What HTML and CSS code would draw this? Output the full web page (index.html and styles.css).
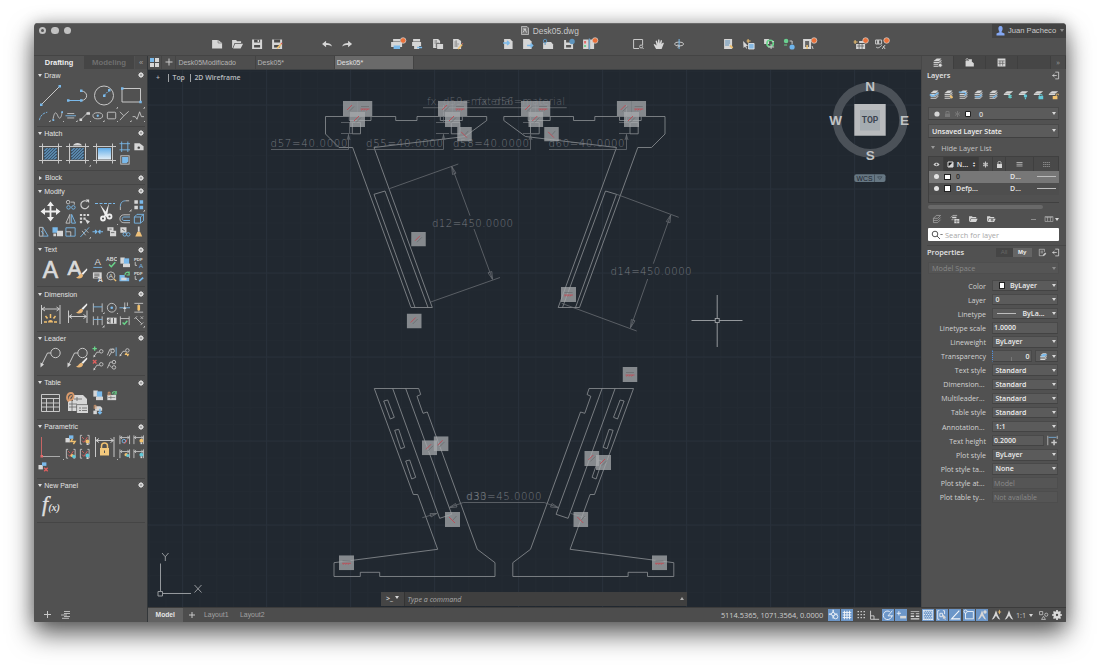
FILE: index.html
```html
<!DOCTYPE html>
<html lang="en">
<head>
<meta charset="utf-8">
<title>Desk05.dwg</title>
<link rel="stylesheet" href="styles.css">
</head>
<body>
<svg class="defs" width="0" height="0">
  <symbol id="gear" viewBox="0 0 12 12"><circle cx="6" cy="6" r="2.900" fill="none" stroke="#dcdcdc" stroke-width="3"/><path d="M6 0V12M0 6H12M1.8 1.8L10.2 10.2M10.2 1.8L1.8 10.2" stroke="#dcdcdc" stroke-width="2" stroke-dasharray="2.4 7.2 2.4"/></symbol>
  <symbol id="stack" viewBox="0 0 14 14"><path class="fw" d="M2 5L6 2h6L9 5zM2 6.2h7l3-2.6v1.4L9 7.6H2zM2 8.6h7l3-2.6v1.4L9 10H2zM2 11h7l3-2.6v1.2L9 12.4H2z"/></symbol>
  <symbol id="brush" viewBox="0 0 10 10"><path fill="#efefef" stroke="none" d="M9.600.3L5 4.600l1.200 1.200L10 1.400z"/><path fill="#e9b778" stroke="none" d="M5 4.800C2.600 5 3 7.600.3 8c2.500 1.600 5.700.600 6-2z"/></symbol>
  <symbol id="leader" viewBox="0 0 14 14"><path d="M2 11L5 6.500H8"/><circle cx="10" cy="5.500" r="2"/><path class="fw" d="M1 12.500l.5-3 2 1.600z"/></symbol>
  <symbol id="con" viewBox="0 0 14 14"><path d="M4 2H2V12H4M10 2H12V12H10"/><path class="r" d="M4 8L6 10L10 4M4 4l2 2"/></symbol>
  <symbol id="dimv" viewBox="0 0 14 14"><path d="M1.500 2V12M12.500 2V12M2 4.500H12M4 3L2 4.500L4 6M10 3L12 4.500L10 6"/></symbol>
  <symbol id="hash" viewBox="0 0 27 27"><path d="M5.500 3.500V23.500M21.500 3.500V23.500M2 6.500H25M2 20.500H25"/></symbol>
  <symbol id="lines" viewBox="0 0 27 27"><path fill="#39546b" stroke="none" d="M7 8h13v11.500H7z"/><path class="b" stroke-width="1" d="M7.500 11L10.500 8M7.500 14L13.500 8M7.500 17L16.500 8M8 19.500L19.500 8M11 19.500L19.500 11M14 19.500L19.500 14M17 19.500L19.500 17"/></symbol>
  <symbol id="person" viewBox="0 0 14 14"><path class="fw" d="M7 1.500L9 7L12 12.500L9.500 11.500L7 8L4.500 11.500L2 12.500L5 7z"/></symbol>
  <symbol id="folder" viewBox="0 0 14 14"><path class="fw" d="M1.500 3h4l1 1.300h5V6H4L2 10.800h-.5z"/><path class="fw" d="M4.500 6.700h9L11.300 11.300H2.500z"/></symbol>
  <symbol id="import" viewBox="0 0 10 12"><path d="M4 1.500H8.500V10.500H4" fill="none" stroke="#ddd"/><path d="M0 6H6M3 4L.8 6L3 8" fill="none" stroke="#ddd"/></symbol>
  <symbol id="b1" viewBox="0 0 15 15"><path fill="#a5a8ab" fill-opacity=".76" d="M0 0H15V15H0z"/><path stroke="#c04a54" stroke-width=".9" d="M4 9L9 4"/><path stroke="#686c6f" stroke-width=".8" d="M6 10.500L11 5.500"/></symbol>
  <symbol id="b2" viewBox="0 0 15 15"><path fill="#a5a8ab" fill-opacity=".76" d="M0 0H15V15H0z"/><path stroke="#686c6f" stroke-width=".7" d="M3.500 5.500H11.500"/><path stroke="#c04a54" stroke-width=".8" d="M3 8H12M4 9.500L5.200 8M6.500 9.500L7.700 8M9 9.500L10.200 8"/></symbol>
  <symbol id="b3" viewBox="0 0 15 15"><path fill="#a5a8ab" fill-opacity=".76" d="M0 0H15V15H0z"/><path stroke="#c04a54" stroke-width=".9" d="M4 5L10 11"/><path stroke="#686c6f" stroke-width=".8" d="M8 8L11.500 4"/></symbol>
</svg>

<div class="window">
  <header class="titlebar">
    <div class="title-row">
      <div class="lights"><i class="dot edited"></i><i class="dot"></i><i class="dot"></i></div>
      <div class="title"><svg width="8" height="9" viewBox="0 0 8 9"><path fill="#777" stroke="#c4c4c4" stroke-width=".8" d="M.5.500H6L7.500 2V8.500H.5z"/><path stroke="#ddd" stroke-width=".8" fill="none" d="M2 6.500L4 3l1.500 3.500M2 3h3"/></svg>Desk05.dwg</div>
      <div class="user"><svg width="9" height="10" viewBox="0 0 9 10"><path fill="#84a8f4" stroke="none" d="M4.500 0C6.600 0 6.800 2 6.500 3.500C6.200 5 5.500 5.500 5.500 6.300L8.500 7.500V9.500H.5V7.500L3.500 6.300C3.500 5.500 2.800 5 2.500 3.500C2.200 2 2.400 0 4.500 0z"/></svg><span>Juan Pacheco</span><b class="caret dim"></b></div>
    </div>
    <nav class="toolbar">
      <div class="group g1">
        <svg viewBox="0 0 20 14"><path class="fw" d="M5 3h6l4 3v5.500H5z"/><path stroke="#777" stroke-width=".7" d="M11 3v3h4"/></svg>
        <svg viewBox="0 0 20 14"><path class="fw" d="M5 3h4l1 1.300h4V6H7.500L5.500 11H5z"/><path class="fw" d="M8 6.800h8L13.500 11.500H6z"/></svg>
        <svg viewBox="0 0 20 14"><path class="fw" d="M5 2.500H15V12H5z"/><path fill="#4a4a4a" stroke="none" d="M7 2.500h6v3H7zM7 8h6v2.500H7z"/><path class="fw" d="M10.500 3h1.500v2h-1.500z"/></svg>
        <svg viewBox="0 0 20 14"><path class="fw" d="M5 2.500H15V12H5z"/><path fill="#4a4a4a" stroke="none" d="M7 2.500h6v3H7zM7 8h6v2.500H7z"/><path class="y" stroke-width="1.800" d="M10 11.500L14 7"/><path class="r" stroke-width="1.500" d="M14 7l1-1"/></svg>
      </div>
      <div class="group g2">
        <svg viewBox="0 0 20 14"><path class="fw" d="M5 7L9 3.700V6C12 6 14 6.500 15 9.500C13 8 11.500 8 9 8V10.300z"/></svg>
        <svg viewBox="0 0 20 14"><path class="fw" d="M15 7L11 3.700V6C8 6 6 6.500 5 9.500C7 8 8.500 8 11 8V10.300z"/></svg>
      </div>
      <div class="group g3">
        <svg viewBox="0 0 20 14"><path class="fw" d="M6 2h7v2.500H6zM4 5h11v5H4z"/><path class="fb" d="M6.500 8.500h6.500V12H6.500z"/><circle class="fo" cx="16" cy="3.500" r="2.800"/></svg>
        <svg viewBox="0 0 20 14"><path class="fw" d="M6 2h7v2.500H6zM5 5h9v4H5zM7 9h5v3H7z"/><path class="b" stroke-width="1.500" d="M10 10.500h5"/></svg>
        <svg viewBox="0 0 20 14"><path class="fw" d="M5 2h5l2 2v7H5z"/><path stroke="#777" stroke-width=".6" d="M6 4h3M6 6h5M8 3v7"/><path class="fw" d="M9 7h6v5H9z"/><path stroke="#555" stroke-width=".7" d="M8.500 12V6.500H15"/></svg>
        <svg viewBox="0 0 20 14"><path class="fw" d="M5 2h5l3 2v8H5z"/><path stroke="#777" stroke-width=".6" d="M6 5h3M6 7h5M6 9h4M8 3v7"/><path class="y" stroke-width="1.700" d="M10 12L14 7.500"/><path class="r" d="M14 7l.8-.8"/></svg>
      </div>
      <div class="group g4">
        <svg viewBox="0 0 20 14"><path class="fw" d="M6 2h6l2.500 2.500V12H6z"/><path class="b" stroke-width="1.500" d="M5 6h6M9 4l2 2-2 2"/></svg>
        <svg viewBox="0 0 20 14"><path class="fw" d="M5 2h6l2.500 2.500V12H5z"/><path class="b" stroke-width="1.500" d="M9 8.500h6M12.500 6.500l2 2-2 2"/></svg>
        <svg viewBox="0 0 20 14"><path class="fw" d="M6 5h7l2 2.500V12H5V6z"/><circle class="b2" cx="7" cy="4" r="1.700" fill="none"/><path class="b2" d="M7 5v3"/></svg>
        <svg viewBox="0 0 20 14"><path class="fw" d="M5 3H14V12H5z"/><path fill="#555" stroke="none" d="M7 3h4v2.500H7zM7 8h5v2.500H7z"/><circle fill="#5e94bd" stroke="none" cx="13" cy="4.500" r="2.700"/></svg>
        <svg viewBox="0 0 20 14"><path class="fw" d="M4 2.500h5.500V12H4zM11 2.500h4V12h-4z"/><path class="b" d="M10.200 1.500v11"/><path class="fr" d="M5 4h2v2.500H5z"/><path class="fg" d="M5 8h2v2H5z"/><circle class="fo" cx="16" cy="3.500" r="2.800"/></svg>
      </div>
      <div class="group g5">
        <svg viewBox="0 0 20 14"><path d="M14.500 8V2.500H5.500V11.500H11"/><circle cx="13" cy="9.500" r="1.500"/><path d="M14 10.500l1.500 1.500"/></svg>
        <svg viewBox="0 0 20 14"><path class="fw" d="M7 12L4.500 7.500L5.500 7L7.500 8.500L6.500 4L7.700 3.600L8.800 6.500L9 2.500H10.300L10.600 6.500L11.800 3L13 3.500L12.300 7L14 5.500L14.800 6.200L12.500 12z"/></svg>
        <svg viewBox="0 0 20 14"><ellipse cx="10" cy="7" rx="4.500" ry="2"/><path class="b" d="M10 2v10"/><path d="M8.500 7.500L10.500 9L8.500 10.500"/></svg>
      </div>
      <div class="group g6">
        <svg viewBox="0 0 20 14"><path class="fw" d="M6 2h8v10H6z"/><path stroke="#5d8fb8" d="M7 4h5M7 6h5M7 8h4"/><path class="y" stroke-width="1.800" d="M12 8.500l2.500 2.500"/></svg>
        <svg viewBox="0 0 20 14"><path class="fw" d="M4 4l5 5H7l1 2.500H7L6 9.500L4.500 11z"/><path class="y" d="M9 2v4M7.500 4h4"/><path fill="#86b9e2" stroke="#eee" stroke-width=".8" d="M9.500 6.500h5.500V12H9.500z"/></svg>
        <svg viewBox="0 0 20 14"><path class="fw" d="M5 2h5v5H5z"/><circle class="g" cx="11" cy="6.500" r="3.200" stroke-width="1.600"/><path d="M9 10h6M12 7v5M13 4.500h2"/></svg>
        <svg viewBox="0 0 20 14"><circle class="fg" cx="7" cy="4" r="2.300"/><path d="M10.500 4H13V7"/><circle fill="#6fb5ec" stroke="none" cx="13" cy="10" r="2.600"/><path class="g" d="M5 8h3"/></svg>
        <svg viewBox="0 0 20 14"><path class="fw" d="M4 2h8v10H4z"/><path fill="#666" stroke="none" d="M6 4h4v6H6z"/><path class="y" stroke-width="1.500" d="M8 8v4"/><path d="M13 9l1 3"/><circle class="fo" cx="15" cy="3.500" r="2.800"/></svg>
      </div>
      <div class="group g7">
        <svg viewBox="0 0 20 14"><path class="fw" d="M6 7h9v5H6zM9 4h5v2H9z"/><path stroke="#555" stroke-width=".7" d="M7 9h7M9 7v5M12 7v5"/><path class="y" d="M5 3v4M3.500 5h4"/><circle class="fo" cx="15.500" cy="3.500" r="2.800"/></svg>
        <svg viewBox="0 0 20 14"><path d="M4.500 3h6v4h-6zM5 10c2 2 4 0 6-2M12 9l2 3M14 8l-3 4"/><path stroke-width="2" d="M7 3v4"/><circle class="fo" cx="15.500" cy="3.500" r="2.800"/></svg>
      </div>
    </nav>
  </header>

  <div class="body">
    <aside class="left">
      <div class="modes"><b class="on">Drafting</b><b>Modeling</b><span>«</span></div>

      <section class="panel tall first">
        <h3><i class="tri"></i>Draw<svg class="gear"><use href="#gear"/></svg></h3>
        <div class="tools">
          <svg class="big" viewBox="0 0 27 27"><path d="M4.500 22.500L22.500 4.500"/><path class="fb" d="M3 21.500h2.500V24H3zM21.500 3H24v2.500h-2.500z"/></svg>
          <svg class="big" viewBox="0 0 27 27"><path d="M4 18.500H17C24.500 18.500 24.500 9 17 9"/><path class="b" d="M4 18.500H16"/><path class="fb" d="M3 17.300h2.500v2.500H3zM16 17.300h2.500v2.500H16zM16 7.500h2.500V10H16z"/></svg>
          <svg class="big flag" viewBox="0 0 27 27"><circle cx="13" cy="13.500" r="9.500"/><path class="b" stroke-dasharray="2 1" d="M13 13.500L18.500 8"/><path class="fb" d="M12 12.500h2.500V15H12zM17 7h2.500v2.500H17z"/></svg>
          <svg class="big flag" viewBox="0 0 27 27"><path d="M4 6.500H22.500V20H4z"/><path class="fb" d="M3 5.300h2.500v2.500H3zM21.300 18.800h2.500v2.500h-2.500z"/></svg>
          <svg class="flag" viewBox="0 0 14 14"><path class="b" stroke-dasharray="3 1" d="M2 12C3 7 6 4 11 3"/></svg>
          <svg class="flag" viewBox="0 0 14 14"><path d="M1.500 12C3 2 5 2 7 7S11 10 12 2.500"/><path class="fb" d="M1 11h2v2H1zM11 2h2v2h-2z"/></svg>
          <svg class="flag" viewBox="0 0 14 14"><path class="b" d="M1 7H13"/><path d="M3 4.500h8M3 9.500h8"/></svg>
          <svg class="flag" viewBox="0 0 14 14"><path d="M2.500 11.500L11.500 2.500"/><path class="fw" d="M1 10h3v3H1zM9 3h4v3H9z"/></svg>
          <svg class="flag" viewBox="0 0 14 14"><ellipse cx="7" cy="7" rx="5.500" ry="3.500"/><circle class="fb" cx="7" cy="7" r="1.300"/></svg>
          <svg class="flag" viewBox="0 0 14 14"><rect x="2" y="3" width="9.500" height="7.500" rx="1"/></svg>
          <svg class="flag" viewBox="0 0 14 14"><path d="M1.500 2.500L6 7L11.500 2M6 7L1.500 12"/></svg>
          <svg class="flag" viewBox="0 0 14 14"><path d="M0 8H3L5 11L8 2.500L10 8H13"/></svg>
        </div>
      </section>

      <section class="panel">
        <h3><i class="tri"></i>Hatch<svg class="gear"><use href="#gear"/></svg></h3>
        <div class="tools">
          <svg class="big" viewBox="0 0 27 27"><use href="#lines"/><use href="#hash"/></svg>
          <svg class="big flag" viewBox="0 0 27 27"><use href="#lines"/><use href="#hash"/><path class="fw" d="M9 5.500c1-3.500 8-3.500 9 0z"/></svg>
          <svg class="big" viewBox="0 0 27 27"><defs><linearGradient id="fade" x2="0" y2="1"><stop stop-color="#62aeea"/><stop offset="1" stop-color="#e4eef6"/></linearGradient></defs><path fill="url(#fade)" stroke="none" d="M7 8h13v11.500H7z"/><use href="#hash"/></svg>
          <svg viewBox="0 0 14 14"><path class="b" d="M3.500 1V13M10.500 1V13M1 3.500H13M1 10.500H13"/></svg>
          <svg viewBox="0 0 14 14"><path class="fw" d="M2 3h6l4.500 3.500V11H2z"/><circle cx="7" cy="8" r="1.400" fill="#444" stroke="none"/></svg>
          <svg viewBox="0 0 14 14"><path class="fb" d="M4 4h7v5l-2 2H4z"/><rect x="2.500" y="2.500" width="9.500" height="9.500"/></svg>
        </div>
      </section>

      <section class="panel closed">
        <h3><i class="tri folded"></i>Block<svg class="gear"><use href="#gear"/></svg></h3>
      </section>

      <section class="panel tall">
        <h3><i class="tri"></i>Modify<svg class="gear"><use href="#gear"/></svg></h3>
        <div class="tools">
          <svg class="big" viewBox="0 0 27 27"><path stroke="#eee" stroke-width="1.800" d="M13.500 6V21M6 13.500H21"/><path fill="#eee" stroke="none" d="M13.500 3.500L17 8h-7zM13.500 23.500L17 19h-7zM3.500 13.500L8 10v7zM23.500 13.500L19 10v7z"/></svg>
          <svg viewBox="0 0 14 14"><circle cx="4" cy="4" r="2"/><path d="M7 4h4v3"/><g class="b"><circle cx="4.500" cy="10" r="2"/><circle cx="10" cy="10" r="2"/></g></svg>
          <svg viewBox="0 0 14 14"><path stroke-width="1.400" d="M10 3.500A4.500 4.500 0 1 0 11.500 8"/><path class="fw" d="M8 1h4v4z"/></svg>
          <svg class="big flag" viewBox="0 0 27 27"><path class="b" stroke-dasharray="3 1.500" d="M4 5.500H24"/><path fill="#eee" stroke="none" d="M9 6.500l8 10-2.500 2zM18 5l-2 14-3-1z"/><g stroke="#eee" stroke-width="1.800"><circle cx="12" cy="20.500" r="2"/><circle cx="18.500" cy="18.500" r="2"/></g></svg>
          <svg class="flag" viewBox="0 0 14 14"><path d="M2 13V9M8 2.500H12"/><path class="b" d="M2 9C2 4 5 2.500 8 2.500"/></svg>
          <svg class="flag" viewBox="0 0 14 14"><path class="fw" d="M2 2h4v4H2zM2 8h4v4H2z"/><path class="fb" d="M8 2h4v4H8zM8 8h4v4H8z"/></svg>
          <svg viewBox="0 0 14 14"><path d="M6 2V12H1.500z"/><path class="b" d="M8 2V12H12.500z"/></svg>
          <svg viewBox="0 0 14 14"><path class="fw" d="M1.500 1.500h2.500v2.500h-2.500zM5.500 1.500H8V4H5.500zM9.500 1.500H12V4H9.500zM1.500 5.500h2.500V8h-2.500zM5.500 5.500H8V8H5.500zM1.500 9.500h2.500V12h-2.500zM7 7l6 3-3 3z"/></svg>
          <svg viewBox="0 0 14 14"><path d="M13 2.500H6C0 2.500 0 11.500 6 11.500H13"/><path class="b" d="M13 5H6C3.500 5 3.500 9 6 9H13"/></svg>
          <svg viewBox="0 0 14 14"><path class="b" d="M2 5h7v7H2zM2 5l3-3h7.500v7L9 12M9 5l3.500-3"/></svg>
          <svg viewBox="0 0 14 14"><path d="M2 2h4v10H2z"/><path class="b" d="M6 2l6 10H6M4 6l3 4"/></svg>
          <svg viewBox="0 0 14 14"><path class="fb" d="M1 2h6v6H1z"/><path class="fw" d="M6 6h7v6H6zM2 9h3v3H2z"/></svg>
          <svg viewBox="0 0 14 14"><path class="b" d="M1.500 2.500H12V12H1.500z"/><path d="M1.500 7H7v5"/></svg>
          <svg class="flag" viewBox="0 0 14 14"><path class="b" d="M2 13L12 2"/><path d="M4 6l4 5M7 4l4 4"/></svg>
          <svg viewBox="0 0 14 14"><path class="b" stroke-width="1.400" d="M1 7H6M8 7H13M4 5l2 2-2 2M10 5L8 7l2 2"/></svg>
          <svg viewBox="0 0 14 14"><path class="fw" d="M2 2h7v4H2zM5 6h7v6H5z"/><path stroke="#666" d="M6 8h4M4 4h3"/></svg>
          <svg viewBox="0 0 14 14"><path class="fw" d="M2 2h7v6H2z"/><path stroke="#555" d="M4 4l3 2"/><g class="b"><circle cx="7" cy="10" r="2"/><circle cx="11" cy="10" r="2"/></g></svg>
          <svg viewBox="0 0 14 14"><path class="fw" d="M6 1h2v6H6z"/><path fill="#eec078" stroke="none" d="M5.500 7h3L11 12.500H3z"/></svg>
        </div>
      </section>

      <section class="panel">
        <h3><i class="tri"></i>Text<svg class="gear"><use href="#gear"/></svg></h3>
        <div class="tools">
          <svg class="big" viewBox="0 0 27 27"><text class="gl heavy" x="13.500" y="22" font-size="23" text-anchor="middle">A</text></svg>
          <svg class="big" viewBox="0 0 27 27"><text class="gl heavy" x="10.500" y="19" font-size="21" text-anchor="middle">A</text><use href="#brush" x="11.500" y="12" width="12" height="12"/></svg>
          <svg viewBox="0 0 14 14"><text class="gl" x="7" y="10" font-size="11" text-anchor="middle">A</text><path class="b" d="M2 12.300H12"/></svg>
          <svg viewBox="0 0 14 14"><text class="gl bold" x="7" y="5" font-size="6" text-anchor="middle">ABC</text><path class="g" stroke-width="1.700" d="M4 9L6.500 11.500L11 6.500"/></svg>
          <svg viewBox="0 0 14 14"><path class="fw" d="M2 1h5v7H2z"/><path class="fb" d="M6 2h6v8H6z"/><path class="fw" d="M5 8h8v4H5z"/></svg>
          <svg viewBox="0 0 14 14"><text class="gl bold" x="6.500" y="5" font-size="5" text-anchor="middle">PDF</text><path d="M3 6v4h2"/><text x="9.500" y="13" font-size="7" class="bl" text-anchor="middle">A</text></svg>
          <svg viewBox="0 0 14 14"><path class="fw" d="M1.500 2h10v7h-10z"/><path stroke="#555" d="M3 4h6M3 6h6M3 8h4"/><text class="gl bold" x="10" y="12.500" font-size="8" text-anchor="middle">A</text></svg>
          <svg viewBox="0 0 14 14"><circle cx="6" cy="6" r="4.500"/><text class="gl" x="6" y="8.500" font-size="7" text-anchor="middle">A</text><path class="y" stroke-width="1.500" d="M9.500 9.500L12 12"/></svg>
          <svg viewBox="0 0 14 14"><path class="fb" d="M1 5h6v7H1zM6 8h6v4H6z"/><path class="fw" d="M3 8h6v3H3z"/><path class="g" stroke-width="1.300" d="M7.500 5A2.500 2.500 0 0 1 12 3M12 1V5H9"/></svg>
          <svg viewBox="0 0 14 14"><text class="gl bold" x="6.500" y="5" font-size="5" text-anchor="middle">PDF</text><path d="M3 6v4h2"/><path class="b" stroke-width="2" d="M7.500 12L12 8"/></svg>
        </div>
      </section>

      <section class="panel">
        <h3><i class="tri"></i>Dimension<svg class="gear"><use href="#gear"/></svg></h3>
        <div class="tools">
          <svg class="big" viewBox="0 0 27 27"><path d="M4.500 4V23M23 4V23M5 8H22M8 6L5 8l3 2M19.500 6l3 2-3 2"/><path class="y" stroke-width="1.500" d="M7 21H10M17 21h3M13.500 13v4M8.500 15l2 2.500M18.500 15l-2 2.500"/><path fill="#f0bd6e" stroke="none" d="M11 21.500a2.500 2.500 0 0 1 5 0z"/></svg>
          <svg class="big" viewBox="0 0 27 27"><path d="M4.500 9.500V22M23 9.500V22M5 15.500H22M8 13.500L5 15.500l3 2M19.500 13.500l3 2-3 2"/><use href="#brush" x="11.500" y="2" width="12" height="12"/></svg>
          <svg class="flag" viewBox="0 0 14 14"><path d="M2 2V12M12 2V12"/><path class="b" d="M2 6H12"/></svg>
          <svg class="flag" viewBox="0 0 14 14"><circle cx="7" cy="7" r="5"/><circle class="fb" cx="7" cy="7" r="1.500"/></svg>
          <svg viewBox="0 0 14 14"><path d="M7 1V12M10 1V5"/><path class="b" d="M1 7H13"/><path class="fw" d="M7 5.500L9 8.500H5z"/></svg>
          <svg viewBox="0 0 14 14"><path d="M2 2H12M2 12H12M7 3V11"/><path class="fy" d="M5.500 4h3v6h-3z"/></svg>
          <svg class="flag" viewBox="0 0 14 14"><path d="M2 2V12M7 2V12M12 2V12"/><path class="b" d="M2 5.500H12"/></svg>
          <svg viewBox="0 0 14 14"><path class="fw" d="M1.500 3.500h11v7h-11z"/><path stroke="#444" d="M5 4v6M9 4v6"/><circle cx="3.500" cy="7" r="1" stroke="#444"/></svg>
          <svg viewBox="0 0 14 14"><path d="M2 2V12M12 2V12M2 4.500H12"/><path class="g" stroke-width="1.600" d="M4.500 9L6.500 11L10 7"/></svg>
          <svg class="flag" viewBox="0 0 14 14"><path d="M2 5L5 2M9 12L12 9M3.500 3.500L10.500 10.500"/><path stroke-width=".8" d="M9 2l3 3M12 2L9 5"/></svg>
        </div>
      </section>

      <section class="panel">
        <h3><i class="tri"></i>Leader<svg class="gear"><use href="#gear"/></svg></h3>
        <div class="tools">
          <svg class="big" viewBox="0 0 27 27"><circle cx="18.500" cy="8" r="4.700"/><path d="M13.800 8H10.500L4.500 20"/><path class="fw" d="M3.500 22.500L3.500 17.500L7 19.500z"/></svg>
          <svg class="big" viewBox="0 0 27 27"><circle cx="18.500" cy="8" r="4.700"/><path d="M13.800 8H10.500L4.500 20"/><path class="fw" d="M3.500 22.500L3.500 17.500L7 19.500z"/><use href="#brush" x="11.500" y="12" width="12" height="12"/></svg>
          <svg viewBox="0 0 14 14"><use href="#leader" x="1" y="1"/><path class="g" stroke-width="1.500" d="M1 3.500h5M3.500 1v5"/></svg>
          <svg viewBox="0 0 14 14"><path d="M2 11L5 4H10M4 12L7 7"/><circle cx="8" cy="6" r="2"/><path class="b" d="M12 2V12"/></svg>
          <svg viewBox="0 0 14 14"><use href="#leader"/><path class="y" stroke-width="1.500" d="M9 8l-1 2h3l-1 2"/></svg>
          <svg></svg>
          <svg viewBox="0 0 14 14"><use href="#leader" x="1" y="1"/><path class="r" stroke-width="1.500" d="M1.500 1.500l4 4M5.500 1.500l-4 4"/></svg>
          <svg viewBox="0 0 14 14"><path d="M2 11L5 4H8"/><circle cx="9.500" cy="4" r="2"/><circle cx="9.500" cy="10" r="2"/><path d="M4 7l3 3"/></svg>
        </div>
      </section>

      <section class="panel">
        <h3><i class="tri"></i>Table<svg class="gear"><use href="#gear"/></svg></h3>
        <div class="tools">
          <svg class="big" viewBox="0 0 27 27"><path d="M4.500 5.500H22.500V22.500H4.500zM4.500 9.500H22.500M4.500 14H22.500M4.500 18H22.500M9.500 9.500V22M16.500 9.500V22"/></svg>
          <svg class="big" viewBox="0 0 27 27"><path class="fw" d="M9 6h10l4 4v7H9zM4 12h16v10H4zM13 16h11v8H13z"/><path stroke="#666" stroke-width=".8" d="M5 15h8M5 18h8M8 12v10M15 19h2M18 19h5M15 21.500h2M18 21.500h5M13 8v4M10 10h8M12.600 24v-8.400H24"/><path stroke="#d7996b" stroke-width="1.800" d="M5 12.500C1.500 10 3 4 7 4S10 10 7 11S6 6 8 7"/></svg>
          <svg viewBox="0 0 14 14"><path class="fw" d="M2 1h5v7H2z"/><path class="fb" d="M6 2h6v8H6z"/><path class="fw" d="M5 8h8v4H5z"/></svg>
          <svg viewBox="0 0 14 14"><path class="fw" d="M2 6h10v6H2z"/><path stroke="#666" stroke-width=".7" d="M3 9h8M6 7v4"/><path stroke="#d7996b" d="M3 7V3h2v4"/><path class="g" stroke-width="1.200" d="M7.500 4.500A2.500 2.500 0 0 1 12 3.500M12 1.500V5H9"/></svg>
          <svg></svg><svg></svg>
          <svg viewBox="0 0 14 14"><path class="fw" d="M4 3h6l2 2v3H4z"/><path stroke="#d7996b" d="M3 6V2h2v4"/><path class="b" stroke-width="1.800" d="M9.500 6v5M7.500 9.500l2 2 2-2"/><path class="fw" d="M2 8h4v4H2z"/></svg>
        </div>
      </section>

      <section class="panel tall">
        <h3><i class="tri"></i>Parametric<svg class="gear"><use href="#gear"/></svg></h3>
        <div class="tools">
          <svg class="big flag" viewBox="0 0 27 27"><path d="M5 23.500H23" stroke="#aaa"/><path stroke="#c76564" d="M4.500 4V23"/><path class="fr" d="M3.500 22h2.500v2.500H3.500z"/></svg>
          <svg viewBox="0 0 14 14"><path class="fw" d="M1 5h5v5H1z"/><path class="fb" d="M5 2h5v4H5z"/><path class="y" stroke-width="1.600" d="M9 6l-2 3h5l-2 3"/></svg>
          <svg viewBox="0 0 14 14"><use href="#con"/><circle class="fy" cx="10" cy="9" r="2.200"/><path class="fw" d="M9 11h2v2H9z"/></svg>
          <svg class="big flag" viewBox="0 0 27 27"><path d="M4.500 4V24M23 4V24M5 7.500H22M8 5.500L5 7.500l3 2M19.500 5.500l3 2-3 2"/><path class="y" stroke-width="1.500" d="M10.500 15v-2a3 3 0 0 1 6 0v2"/><path fill="#f3c97d" stroke="none" d="M9 15h9v7.500H9z"/><path stroke="#555" d="M13.500 17.500v2.500"/></svg>
          <svg viewBox="0 0 14 14"><use href="#dimv"/><circle class="b" cx="6" cy="8.500" r="2"/><path class="r" d="M6 11A3 3 0 0 0 9 7"/></svg>
          <svg viewBox="0 0 14 14"><use href="#dimv"/><circle class="fy" cx="10" cy="8" r="2.200"/><path class="fw" d="M9 10h2v2H9z"/></svg>
          <svg viewBox="0 0 14 14"><use href="#con"/><circle class="fy" cx="8.500" cy="9" r="1.800"/><circle class="fc" cx="10.500" cy="10" r="2"/></svg>
          <svg viewBox="0 0 14 14"><use href="#con"/><circle class="fc" cx="10" cy="9" r="2.200"/><path class="fw" d="M9 11h2v2H9z"/></svg>
          <svg viewBox="0 0 14 14"><use href="#dimv"/><circle class="fy" cx="8.500" cy="8" r="1.800"/><circle class="fc" cx="10.500" cy="9" r="1.800"/></svg>
          <svg viewBox="0 0 14 14"><use href="#dimv"/><circle class="fc" cx="10" cy="8" r="2.200"/><path class="fw" d="M9 10h2v2H9z"/></svg>
          <svg viewBox="0 0 14 14"><path class="fw" d="M1 5h5v5H1z"/><path class="fb" d="M5 2h5v4H5z"/><path class="r" stroke-width="1.600" d="M7.500 8l4 4M11.500 8l-4 4"/></svg>
        </div>
      </section>

      <section class="panel last">
        <h3><i class="tri"></i>New Panel<svg class="gear"><use href="#gear"/></svg></h3>
        <div class="fx"><span>f</span>(x)</div>
      </section>

      <footer class="left-foot">
        <svg width="9" height="9" viewBox="0 0 9 9"><path d="M4.500 1V8M1 4.500H8"/></svg>
        <svg width="10" height="9" viewBox="0 0 10 9"><path d="M3 1.500h6M3 3.500h6M0 5h6M3 6.500h6M1 8.300h7" stroke-width=".9"/></svg>
      </footer>
    </aside>

    <div class="rest">
      <div class="mid">
        <main class="center">
          <div class="tabs">
            <span class="home"><svg width="9" height="9" viewBox="0 0 9 9"><path class="fb" d="M0 0h4v4H0z"/><path class="fw" d="M5 0h4v4H5zM0 5h4v4H0zM5 5h4v4H5z"/></svg></span>
            <span class="home"><svg width="8" height="8" viewBox="0 0 8 8"><path d="M4 .5V7.500M.5 4H7.500"/></svg></span>
            <span class="tab">Desk05Modificado</span><span class="tab">Desk05*</span><span class="tab active">Desk05*</span>
          </div>
          <div class="canvas">
            <svg class="drawing" width="773" height="537" viewBox="148 70 773 537">
              <defs>
                <pattern id="minor" x="182.400" y="104.800" width="16.800" height="16.800" patternUnits="userSpaceOnUse"><path d="M.5 0V16.800M0 .5H16.800" fill="none" stroke="#232a32"/></pattern>
                <pattern id="major" x="182" y="104.500" width="84" height="84" patternUnits="userSpaceOnUse"><path d="M.5 0V84M0 .5H84" fill="none" stroke="#28303a"/></pattern>
                <g id="top-leg">
                  <path d="M325.500 116.500H395.700V120.500H417V116.500H486.700V120.500L465 136.500L374 147.500L432.300 307.500H411L352.700 147.500H339L325.500 134z"/>
                  <path d="M415 307.500L374 194.300L385 191L428 307.500M349.300 116.500V120.500H371V116.500M440.300 116.500V120.500H462.300V116.500M352.300 122.500H360.500V133.800H352.300zM451.300 122.500H460V133.800H451.300z"/>
                </g>
                <g id="low-leg">
                  <path d="M374.300 388.500H418.700L420.700 394.500L417 396.300L423 413.300L427.300 412L477.300 549.300L495 562.700V576.500H379.700V572.300H360.300V576.500H334V562.700L437.700 549.300L417.700 494.500H413.300z"/>
                  <path d="M392.700 388.500L439.700 518.300L451.700 514.300L405.700 388.500M383.700 401L387.700 400L394.300 417.300L390.300 419zM394.700 430.300L398.700 429.300L404.700 447.300L400.700 448.700zM405.700 461L409.700 460L415.700 477.300L411.700 479z"/>
                </g>
              </defs>
              <path fill="url(#minor)" d="M148 70H921V607H148z"/><path fill="url(#major)" d="M148 70H921V607H148z"/>
              <g class="geo">
                <use href="#top-leg"/><use href="#top-leg" transform="translate(990.500) scale(-1 1)"/>
                <use href="#low-leg"/><use href="#low-leg" transform="translate(1007.800) scale(-1 1)"/>
              </g>
              <g class="dims">
                <path d="M271 149.500H348.500V134M366.700 149.500H443.500V134M453.700 149.500H530.500V134M549 149.500H626.500V134"/>
                <path d="M341 122.500H352M341 133.500H352M436 122.500H451M436 133.500H449M523 122.500H534M523 133.500H531M619 122.500H630M619 133.500H630M349.500 122V133M443.500 105V122M530.500 105V122M626.500 105V122"/>
                <path d="M347 140L348.500 135L350 140M442 140L443.500 135L445 140M529 140L530.500 135L532 140M625 140L626.500 135L628 140"/>
                <path d="M423 107.700H566.700"/>
                <path d="M389.300 188.700L458.300 164M430.700 302L500 277.500M451.700 166.300L470 215.700M474 229L492.500 279.300M451.700 166.300L452.500 174.500L456 173.200zM492.500 279.300L488 272.800L491.800 271.500z"/>
                <path d="M616.700 194.300L678.700 217.300M561.700 303.300L636.700 331M670.700 215L653.300 263.700M647.700 279L630.500 327.700M670.700 215L666.300 221.500L670 222.800zM630.500 327.700L631.300 319.500L635 320.800z"/>
                <path d="M449 507.700L463.300 502.500H544.300L558.500 507.700M449 507.700L455.500 503.500L457 507zM558.500 507.700L552 503.500L550.500 507zM422.300 517.700L436.700 513.500M436.700 513.500L430 513.500L431 517zM570.700 513.500L585.700 517.700"/>
              </g>
              <g class="dimtext">
                <text x="427" y="104.500" textLength="86" opacity=".75">fx: d59=material</text>
                <text x="478" y="104.500" textLength="87" opacity=".75">fx: d56=material</text>
                <text x="270.500" y="146.700" textLength="77">d57=40.0000</text>
                <text x="366" y="146.700" textLength="77">d55=40.0000</text>
                <text x="453" y="146.700" textLength="76">d58=40.0000</text>
                <text x="548.500" y="146.700" textLength="76">d60=40.0000</text>
                <text x="432" y="227.200" textLength="81">d12=450.0000</text>
                <text x="610.500" y="275" textLength="81">d14=450.0000</text>
                <text x="466" y="499.700" textLength="75.500">d33=45.0000</text>
                <text x="466.500" y="499.700" textLength="20">d30</text>
              </g>
              <g class="badges">
                <use href="#b1" x="343" y="101" width="15" height="15"/><use href="#b2" x="357.500" y="101" width="15" height="15"/><use href="#b1" x="350" y="112" width="15" height="15"/>
                <use href="#b1" x="438" y="101" width="15" height="15"/><use href="#b2" x="452.500" y="101" width="15" height="15"/><use href="#b1" x="445" y="112" width="15" height="15"/><use href="#b3" x="457" y="127" width="15" height="14.500"/>
                <use href="#b1" x="521" y="101" width="15" height="15"/><use href="#b2" x="535.500" y="101" width="15" height="15"/><use href="#b1" x="528.300" y="112" width="15" height="15"/><use href="#b3" x="544" y="127" width="15" height="14.500"/>
                <use href="#b1" x="616.700" y="101" width="15" height="15"/><use href="#b2" x="631.200" y="101" width="15" height="15"/><use href="#b1" x="624" y="112" width="15" height="15"/>
                <use href="#b1" x="411" y="232" width="15" height="14.500"/><use href="#b1" x="406.700" y="313.500" width="15" height="15"/><use href="#b2" x="561" y="287" width="15" height="15"/><use href="#b2" x="622.500" y="367" width="15" height="15"/>
                <use href="#b1" x="422" y="440.300" width="15" height="15"/><use href="#b1" x="433.600" y="436.300" width="15" height="15"/><use href="#b3" x="445" y="512" width="15" height="15"/><use href="#b2" x="339" y="555.300" width="15" height="15"/>
                <use href="#b1" x="584.300" y="451" width="15" height="15"/><use href="#b1" x="596" y="455" width="15" height="15"/><use href="#b3" x="573.300" y="512" width="15" height="15"/><use href="#b2" x="652" y="555.300" width="15" height="15"/>
              </g>
              <g class="cross"><path d="M691.500 320.500H715M719 320.500H742.500M717.200 295V318.500M717.200 322.500V347"/><rect x="715.200" y="318.500" width="4" height="4"/></g>
              <g class="ucs"><path d="M160.500 591V563.500M163 593.500H191M158 591.500h4.500v4.500H158zM162 553l3.300 3.800L168.500 553M165.300 556.800V561M194.500 585l7 7.500M201.500 585l-7 7.500"/></g>
              <g class="cube">
                <circle cx="870.200" cy="120" r="33.200" fill="none" stroke="#4b5158" stroke-width="8.400"/>
                <path fill="#b9bbbd" d="M854.300 104H885.700V135.700H854.300z"/><path fill="#a5acb1" d="M860 110H880V130.500H860z"/>
                <text x="870" y="123" class="top">TOP</text>
                <g class="nesw"><text x="870.200" y="91">N</text><text x="870.200" y="159.500">S</text><text x="835.500" y="125">W</text><text x="904.500" y="125">E</text></g>
                <rect x="854.300" y="174.300" width="31.200" height="7.600" rx="2" fill="#667783"/><path stroke="#3b4650" fill="none" stroke-width=".7" d="M874.500 174.500v7.500M877.500 176.800h4.500l-2.200 2.700z"/><text x="864.500" y="180.700" class="wcs">WCS</text>
              </g>
            </svg>
            <div class="view-label"><i>+</i><span>Top</span><span>2D Wireframe</span></div>
            <div class="command"><span class="prompt">&gt;_<b class="caret"></b></span><em>Type a command</em><b class="caret up"></b></div>
          </div>
        </main>

        <aside class="right">
          <div class="ptabs">
            <span class="on"><svg viewBox="0 0 14 14"><use href="#stack"/><circle cx="10.500" cy="10.500" r="2.500" fill="#ddd" stroke="#555"/></svg></span>
            <span><svg viewBox="0 0 14 14"><path class="fw" d="M2 5h7l3.500 3v4H2z"/><circle cx="4" cy="3.500" r="1.500"/><path class="fw" d="M6 3h4v3H6z"/></svg></span>
            <span><svg viewBox="0 0 14 14"><path class="fw" d="M2 2h10v10H2z"/><path stroke="#666" d="M3 5h8M3 8h8M5 5v6M8.500 5v6"/></svg></span>
            <span class="space"></span><span class="more">»</span>
          </div>
          <div class="rhead"><b>Layers</b><svg class="imp"><use href="#import"/></svg></div>
          <div class="lay-tools">
            <svg viewBox="0 0 14 14"><use href="#stack"/><path class="b" stroke-width="2" d="M1 7l4 2 7-4"/></svg>
            <svg viewBox="0 0 14 14"><use href="#stack"/><path class="y" stroke-width="2.500" d="M9 8.500l3 3"/></svg>
            <svg viewBox="0 0 14 14"><use href="#stack"/><path class="b" stroke-width="1.800" d="M1 4h6c4 0 4 3 1 4"/></svg>
            <svg viewBox="0 0 14 14"><use href="#stack"/><path class="b" stroke-width="1.700" d="M3 10h5l3-3"/></svg>
            <svg viewBox="0 0 14 14"><use href="#stack"/><path class="b" stroke-width="1.700" d="M6 11l5-3"/></svg>
            <svg viewBox="0 0 14 14"><path class="fw" d="M1 6L5 3h8L9 6zM1 6.500h8v1H1z"/><path stroke="#63c6c4" stroke-width="1.300" d="M9 7v5M6.800 8.200l4.400 2.600M11.200 8.200L6.800 10.800"/></svg>
            <svg viewBox="0 0 14 14"><path class="fw" d="M1 6L5 3h8L9 6zM1 6.500h8v1H1z"/><circle class="fc" cx="9.500" cy="9" r="2.200"/><path class="fc" d="M8.700 11h1.600v2H8.700z"/></svg>
            <svg viewBox="0 0 14 14"><path class="fw" d="M1 6L5 3h8L9 6zM1 6.500h8v1H1z"/><path class="fc" d="M7 9h6v4H7z"/><path stroke="#6bc8d0" d="M8.500 9V7h3v2"/></svg>
            <svg viewBox="0 0 14 14"><path class="fw" d="M1 6L5 3h8L9 6zM1 6.500h8v1H1z"/><path class="fy" d="M6 9h6v4H6z"/><path class="y" d="M10.500 9V6.500h3V8"/></svg>
          </div>
          <div class="combo"><svg width="38" height="10" viewBox="0 0 38 10"><circle class="fw" cx="3" cy="5" r="2.600"/><path fill="#777" stroke="none" d="M11 4.500h5V8h-5z"/><path stroke="#777" d="M12 4.500V2.500h3v2M23.500 2v6M21 3.500l5 3M26 3.500l-5 3"/><path fill="#fff" stroke="#222" d="M31.500 2.500h5v5h-5z"/></svg><span>0</span><b class="caret"></b></div>
          <div class="combo state"><strong>Unsaved Layer State</strong><b class="caret"></b></div>
          <div class="hide"><i class="tri"></i>Hide Layer List</div>
          <div class="table">
            <div class="tr th">
              <span><svg viewBox="0 0 14 14"><path class="fw" d="M1 7C4 2.500 10 2.500 13 7C10 11.500 4 11.500 1 7z"/><circle cx="7" cy="7" r="2" fill="#444" stroke="none"/></svg></span>
              <span class="sorted"><svg viewBox="0 0 14 14"><path fill="#111" stroke="#ddd" stroke-width="2" d="M2 2h10v10H2z"/><path class="fw" d="M12 2v10H2z"/></svg>N...<i>▴<br>▾</i></span>
              <span><svg viewBox="0 0 14 14"><path stroke-width="2" d="M7 1V13M2 4l10 6M12 4L2 10"/><circle cx="7" cy="7" r="3.500"/></svg></span>
              <span><svg viewBox="0 0 14 14"><path class="fw" d="M2 6h10v8H2z"/><path stroke-width="1.800" d="M4 6V3c0-3 6-3 6 0v3"/></svg></span>
              <span><svg viewBox="0 0 14 14"><path stroke-width="1.500" d="M1 3H13M1 6.500H13M1 10H13"/></svg></span>
              <span><svg viewBox="0 0 14 14"><path stroke="#999" stroke-width="1.500" d="M0 3H14M0 7H14M0 11H14" stroke-dasharray="3 1"/></svg></span>
            </div>
            <div class="tr sel"><span><i class="bulb"></i></span><span class="name"><i class="sw"></i>0</span><span></span><span></span><span class="wt">D...</span><span><i class="ln"></i></span></div>
            <div class="tr lit"><span><i class="bulb"></i></span><span class="name"><i class="sw"></i>Defp...</span><span></span><span></span><span class="wt">D...</span><span><i class="ln"></i></span></div>
          </div>
          <div class="scroll"></div>
          <div class="list-tools">
            <svg viewBox="0 0 14 14"><path stroke="#aaa" d="M2 6l4-4h6L8 6zM2 9l6 0 4-4M2 12h6l4-4M2 6v6"/></svg>
            <svg viewBox="0 0 14 14"><path d="M1 5l3-3h6M2 8h3"/><path class="fw" d="M6 7h7v6H6zM3 4h6v2H3z"/><path stroke="#555" stroke-width=".8" d="M6 10h7M9.500 8v5"/></svg>
            <svg viewBox="0 0 14 14"><use href="#folder"/></svg>
            <svg viewBox="0 0 14 14"><use href="#folder"/><circle cx="8.500" cy="8.500" r="1.300" stroke="#444"/></svg>
            <u></u>
            <svg viewBox="0 0 14 14"><path stroke="#aaa" d="M1.500 3.500h11v7h-11zM5 4v6M9 4v6M2 5h10"/></svg><b class="caret"></b>
          </div>
          <div class="search"><svg width="13" height="10" viewBox="0 0 13 10"><circle cx="4" cy="4" r="2.800" stroke="#555"/><path stroke="#555" d="M6 6l3 3M9.500 4l1 1 1-1"/></svg>Search for layer</div>
          <div class="prophead"><b>Properties</b><span class="seg"><i>All</i><i class="on">My</i></span><svg class="pe" viewBox="0 0 14 14"><path d="M10 6V2H2V12H8M4 5h4M4 7.500h4"/><path stroke-width="2.500" d="M8 12l4-4"/></svg><svg class="imp"><use href="#import"/></svg></div>
          <div class="combo space">Model Space<b class="caret dim"></b></div>
          <div class="props">
            <label>Color</label><div class="f"><i class="sw"></i><b>ByLayer</b><b class="caret"></b></div>
            <label>Layer</label><div class="f"><b>0</b><b class="caret"></b></div>
            <label>Linetype</label><div class="f"><i class="ln"></i><b>ByLa...</b><b class="caret"></b></div>
            <label>Linetype scale</label><div class="f in"><b>1.0000</b></div>
            <label>Lineweight</label><div class="f"><b>ByLayer</b><b class="caret"></b></div>
            <label>Transparency</label><div class="split"><div class="f slider"><i></i><b>0</b></div><div class="f mini"><svg width="9" height="9" viewBox="0 0 14 14"><use href="#stack"/><path class="fb" d="M2 7L6 3h7L9 7z"/></svg><b class="caret"></b></div></div>
            <label>Text style</label><div class="f"><b>Standard</b><b class="caret"></b></div>
            <label class="cut">Dimension...</label><div class="f"><b>Standard</b><b class="caret"></b></div>
            <label class="cut">Multileader...</label><div class="f"><b>Standard</b><b class="caret"></b></div>
            <label>Table style</label><div class="f"><b>Standard</b><b class="caret"></b></div>
            <label class="cut">Annotation...</label><div class="f"><b>1:1</b><b class="caret"></b></div>
            <label>Text height</label><div class="split"><div class="f in"><b>0.2000</b></div><svg width="11" height="11" viewBox="0 0 14 14"><path d="M1 1V13M13 1V5"/><path class="b" d="M2 3H12"/><path stroke-width="2" d="M9 6v7M5.500 9.500h7"/></svg></div>
            <label>Plot style</label><div class="f"><b>ByLayer</b><b class="caret"></b></div>
            <label class="cut">Plot style ta...</label><div class="f"><b>None</b><b class="caret"></b></div>
            <label class="cut">Plot style at...</label><div class="f off">Model</div>
            <label class="cut">Plot table ty...</label><div class="f off">Not available</div>
          </div>
        </aside>
      </div>

      <footer class="status">
        <span class="model">Model</span><svg class="add" viewBox="0 0 8 8"><path d="M4 1V7M1 4H7"/></svg><span class="lay">Layout1</span><span class="lay">Layout2</span>
        <span class="coords">5114.5365, 1071.3564, 0.0000</span>
        <div class="toggles">
          <svg class="on" viewBox="0 0 14 14"><path stroke-width="1.500" d="M6 1v10M1 6h10"/><circle cx="9" cy="9" r="2.500" fill="#6c96c8"/><circle cx="6" cy="6" r="2" fill="#6c96c8"/></svg>
          <svg class="on" viewBox="0 0 14 14"><path stroke-width="1.100" d="M4 2v10M7 2v10M10 2v10M2 4h10M2 7h10M2 10h10"/></svg>
          <svg viewBox="0 0 14 14"><path stroke-dasharray="1.500 2" stroke-width="1.500" d="M3 3h9M3 6.500h9M3 10h9"/></svg>
          <svg viewBox="0 0 14 14"><path d="M3 2V12H13M3 8h4v4"/></svg>
          <svg class="on" viewBox="0 0 14 14"><path d="M11.500 8A5 5 0 1 1 9 3M7 8h6M7 8l5-6"/></svg>
          <svg class="on" viewBox="0 0 14 14"><path d="M2 5h5M4.500 2.500v5"/><path class="fw" d="M6 8h7v3H6z"/></svg>
          <svg viewBox="0 0 14 14"><path stroke-width=".8" d="M2 3h10"/><path d="M2 5.500h4M8 5.500h4"/><path stroke-width="1.600" d="M2 8.500h4M8 8.500h4M2 11.500h10"/></svg>
          <svg class="on" viewBox="0 0 14 14"><path stroke-dasharray="1.500 1" d="M2 2.500h10M3 4.500h9M2 6.500h10M3 8.500h9M2 10.500h10M3 12h9"/><rect x="1.500" y="1.500" width="11" height="11" stroke-width=".8"/></svg>
          <svg class="on" viewBox="0 0 14 14"><path d="M4 2H2V12H4M8 2h2v4M4.500 5h3v4h-3z"/><path class="fw" d="M8 6l4 4-1.500.3 1 2-1 .5-1-2L8 12z"/></svg>
          <svg class="on" viewBox="0 0 14 14"><path stroke-width="1.300" d="M12 2L3 11.500H13"/></svg>
          <svg class="on" viewBox="0 0 14 14"><rect x="3" y="3" width="9" height="8.500"/><circle cx="3" cy="3" r="1.800" fill="#6c96c8"/></svg>
          <svg class="on" viewBox="0 0 14 14"><use href="#person"/><circle class="fw" cx="10.500" cy="3.500" r="2"/></svg>
          <svg viewBox="0 0 14 14"><use href="#person"/><path class="y" d="M11 1v5M9 3.500h4"/></svg>
          <svg viewBox="0 0 14 14"><use href="#person"/></svg>
        </div>
        <span class="scale">1:1</span><b class="caret"></b>
        <svg class="shapes" viewBox="0 0 14 14"><path d="M2 2h4v4H2zM7 8l2.500 4H4.500z"/><circle cx="10.500" cy="6" r="2"/></svg>
        <svg class="cog"><use href="#gear"/></svg>
      </footer>
    </div>
  </div>
</div>
</body>
</html>
```
FILE: styles.css
```css
* { box-sizing: border-box; }
html, body { height: 100%; }
body { margin: 0; background: #fff; overflow: hidden; font: 7.500px "Liberation Sans", Arial, sans-serif; color: #d6d6d6; padding: 23px 34px; }
.defs { position: absolute; }
svg { fill: none; stroke: #c8c8c8; stroke-width: 1; flex: none; display: block; }
svg text { stroke: none; }
.b { stroke: #7ab9ea; } .b2 { stroke: #5e94bd; } .g { stroke: #69d58a; } .r { stroke: #e0605f; } .y { stroke: #efc070; }
.fw { fill: #d6d6d6; stroke: none; } .fb { fill: #7ab9ea; stroke: none; } .fg { fill: #6ad090; stroke: none; }
.fr { fill: #e46b6b; stroke: none; } .fy { fill: #f2c26d; stroke: none; } .fc { fill: #62c8d8; stroke: none; }
.fo { fill: #ec7139; stroke: #d8d8d8; stroke-width: .7; }
.gl { fill: #dadada; } .bold { font-weight: bold; } .bl { fill: #7ab9ea; }
svg .heavy { stroke: #dadada; stroke-width: .7; }

.window { width: 1032px; height: 599px; background: #515151; border-radius: 4px 4px 1px 1px; overflow: hidden; display: flex; flex-direction: column; box-shadow: 0 12px 26px rgba(0,0,0,.62), 0 0 16px rgba(0,0,0,.22); }
.titlebar { height: 32.500px; border-bottom: 1px solid #444; border-top: 1px solid #6a6a6a; flex: none; }
.title-row { height: 13px; display: flex; justify-content: space-between; align-items: center; padding-left: 5px; }
.lights { display: flex; gap: 5px; width: 110px; }
.dot { width: 7.300px; height: 7.300px; border-radius: 50%; background: #c2c2c2; }
.dot.edited { border: 2.300px solid #c2c2c2; background: #555; }
.title { display: flex; align-items: center; gap: 3.500px; font-size: 8.400px; color: #c8c8c8; margin-right: 41px; }
.user { width: 74px; height: 14px; background: #434343; display: flex; align-items: center; padding: 0 3px 0 3.500px; font-size: 7.600px; gap: 3.500px; white-space: nowrap; color: #ccc; }
.caret { border: 2.200px solid transparent; border-top: 3px solid #d8d8d8; border-bottom: 0; width: 0; height: 0; flex: none; display: inline-block; }
.caret.dim { border-top-color: #8d8d8d; }
.caret.up { border-top: 0; border-bottom: 3px solid #aaa; }
.toolbar { display: flex; padding: 0 0 0 172.500px; }
.toolbar svg { width: 20.200px; height: 14px; }
.group { display: flex; }
.g2 { margin-left: 29.600px; } .g3 { margin-left: 30px; } .g4 { margin-left: 30px; } .g5 { margin-left: 29.500px; } .g6 { margin-left: 29.500px; } .g7 { margin-left: 31px; }

.body { flex: 1; display: flex; min-height: 0; }
.left { width: 114px; border-right: 1px solid #33373a; display: flex; flex-direction: column; }
.modes { height: 13.200px; display: flex; line-height: 13px; flex: none; }
.modes b { width: 50px; text-align: center; background: #454545; color: #6f6f6f; font-size: 7.800px; }
.modes .on { background: #515151; color: #efefef; font-size: 7.400px; }
.modes span { flex: 1; text-align: center; color: #a0a0a0; background: #4b4b4b; margin-left: 1px; }
.panel { height: 44.250px; margin: 0 2px 0 3px; border-bottom: 1px solid #454545; flex: none; }
.panel.tall { height: 58.400px; }
.panel.first { height: 58px; }
.panel.closed { height: 13.900px; }
.panel.last { height: 44px; }
.panel h3 { margin: 0; height: 13.200px; font-weight: normal; font-size: 7px; display: flex; align-items: center; color: #e2e2e2; }
.tri { border: 2.500px solid transparent; border-top: 3px solid #ddd; border-bottom: 0; margin: 0 2.700px 0 .5px; flex: none; }
.tri.folded { border: 2px solid transparent; border-left: 3px solid #ddd; border-right: 0; margin: 0 3.500px 0 1.500px; }
.gear { width: 6px; height: 6px; margin: 0 1px 0 auto; }
.tools { display: grid; grid-template-columns: repeat(8, 13.500px); grid-auto-rows: 13.500px; }
.tools svg { width: 13.500px; height: 13.500px; padding: .6px; }
.tools .big { grid-column: span 2; grid-row: span 2; width: 27px; height: 27px; padding: 0; }
.tools .flag { background: linear-gradient(135deg, transparent 50%, #b5b5b5 50%) right bottom / 2.500px 2.500px no-repeat; }
.fx { font: italic bold 10.500px "Liberation Serif", serif; padding: 0 0 0 4px; display: flex; align-items: baseline; color: #dedede; height: 29px; letter-spacing: -.3px; }
.fx span { font-size: 22px; font-weight: normal; margin-right: .5px; padding-left: 1px; line-height: 24px; -webkit-text-stroke: .4px #dedede; }
.left-foot { margin-top: auto; height: 14px; display: flex; gap: 9.500px; padding: 2px 0 0 8.500px; }

.rest { flex: 1; display: flex; flex-direction: column; min-width: 0; }
.mid { flex: 1; display: flex; min-height: 0; }
.center { flex: 1; display: flex; flex-direction: column; min-width: 0; }
.tabs { height: 14.500px; background: #4e4e4e; display: flex; flex: none; line-height: 14px; border-bottom: 1px solid #3f4244; }
.home { width: 14.200px; border-right: 1px solid #444; display: flex; align-items: center; justify-content: center; }
.tab { width: 79.200px; padding-left: 2px; border-right: 1px solid #434343; color: #b4b4b4; font-size: 7px; }
.tab.active { background: #6a6a6a; color: #e0e0e0; }
.canvas { flex: 1; position: relative; background: #212830; overflow: hidden; }
.drawing { display: block; stroke: none; }
.geo { stroke: #8e9296; stroke-width: .8; }
.dims { stroke: #6c7075; stroke-width: .75; }
.dimtext { fill: #777b80; font: 200 10.200px "DejaVu Sans Light", "DejaVu Sans", sans-serif; }
.badges { stroke: none; }
.cross, .ucs { stroke: #a2a5a8; stroke-width: .9; }
.top { font: bold 8.500px Roboto, sans-serif; fill: #3b4450; text-anchor: middle; }
.nesw { font: bold 13.500px "Liberation Sans", sans-serif; fill: #c1c3c5; text-anchor: middle; }
.wcs { font: 6.800px "Liberation Sans", sans-serif; fill: #1d262f; text-anchor: middle; }
.view-label { position: absolute; left: 8px; top: 2px; display: flex; font: 600 6.900px/11px "Open Sans", sans-serif; color: #b9bcbf; }
.view-label i { font-style: normal; width: 12px; }
.view-label span { border-left: 1px solid #a0a3a6; line-height: 8px; height: 8px; margin-top: 1.500px; padding-left: 3.500px; margin-right: 5px; }
.command { position: absolute; left: 233px; top: 521.500px; width: 305.500px; height: 14.500px; background: #3f3f3f; display: flex; align-items: center; padding-right: 3px; font: 7.100px "Open Sans", sans-serif; color: #aaa; }
.prompt { width: 23.500px; height: 100%; border-right: 1px solid #333; background: #454545; padding: 1px 0 0 5px; font-weight: 700; color: #ccc; }
.prompt .caret { margin: 0 0 2px 2px; }
.command em { flex: 1; padding-left: 3px; }

.right { width: 145px; border-left: 1px solid #474747; font-family: "Open Sans", sans-serif; flex: none; padding-left: 5px; }
.ptabs { display: flex; height: 13.500px; margin-left: -5px; }
.ptabs span { width: 32px; background: #464646; border-right: 1px solid #3f3f3f; display: flex; justify-content: center; align-items: center; }
.ptabs .on { background: #515151; }
.ptabs svg { width: 11px; height: 11px; }
.ptabs .space { flex: 1; } .ptabs .more { width: 15px; background: #4a4a4a; color: #999; }
.rhead, .prophead { display: flex; align-items: center; justify-content: space-between; font-size: 7.400px; height: 12px; padding-right: 6px; font-weight: 600; color: #e4e4e4; }
.rhead b, .prophead b { font-weight: 600; }
.imp { width: 8px; height: 9px; }
.lay-tools { display: flex; height: 25.700px; align-items: center; gap: 3.900px; padding: 1px 0 0 1.500px; }
.lay-tools svg { width: 11px; height: 11px; }
.combo { width: 131px; height: 13.800px; background: #5b5b5b; border: 1px solid #494949; border-bottom-color: #404040; display: flex; align-items: center; padding: 0 2px 0 5px; margin: 0 0 3.600px 1px; font-size: 7.300px; }
.combo .caret { margin-left: auto; }
.combo > span { padding-left: 7px; font-weight: 600; }
.combo strong { font-weight: 600; font-size: 7.100px; color: #efefef; margin-left: -2px; }
.hide { height: 12.500px; margin-bottom: 2.500px; display: flex; align-items: center; font-size: 7.400px; padding-left: 3px; gap: 4px; color: #c5c5c5; }
.hide .tri { border-top-color: #999; }
.table { width: 131px; height: 46.500px; margin-left: 1px; border: 1px solid #404040; border-width: 1px 0 1px 1px; }
.tr { display: grid; grid-template-columns: 15px 35px 14px 13px 28px 25px; height: 11.800px; font-size: 7px; font-weight: 600; color: #e6e6e6; }
.tr > span { display: flex; align-items: center; justify-content: center; gap: 3px; }
.th { height: 13.500px; background: #494949; }
.th > span { border-right: 1px solid #3f3f3f; }
.th svg { width: 7px; height: 7px; }
.th .sorted { background: #3c3c3c; }
.sorted i { font: 4px/3px "DejaVu Sans"; margin-left: 2px; }
.sel { background: #777; } .lit { background: #4e4e4e; }
.tr .name { justify-content: flex-start; gap: 5.500px; }
.sel .name { color: #2b2b2b; }
.tr .wt { justify-content: flex-start; padding-left: 4px; }
.bulb { width: 5.200px; height: 5.200px; border-radius: 50%; background: #e2e2e2; }
.sw { width: 6.500px; height: 6.500px; border: 1px solid #222; background: #fff; flex: none; }
.ln { width: 19px; height: 1px; background: #bdbdbd; flex: none; }
.scroll { width: 115px; height: 4.500px; border-radius: 3px; background: #696969; margin: 1.800px 0 0 1px; }
.list-tools { display: flex; align-items: center; height: 19px; padding: 1px 7px 0 5px; gap: 8px; }
.list-tools svg { width: 10px; height: 10px; }
.list-tools u { width: 5px; height: 1px; background: #8d8d8d; margin-left: auto; }
.list-tools .caret { margin-left: -7px; }
.search { width: 131px; height: 12.500px; margin-left: 1px; background: #fff; border-radius: 1px; color: #a8a8a8; display: flex; align-items: center; padding-left: 3px; gap: 1px; font-size: 7.400px; }
.prophead { margin: 4px 0 3.500px; border-top: 1px solid #474747; height: 14px; gap: 5px; }
.seg { display: flex; margin-left: auto; }
.seg i { width: 17px; height: 9px; background: #454545; color: #666; font: 6px/9px "Liberation Sans", sans-serif; text-align: center; }
.seg .on { width: 19.500px; background: #656565; color: #eee; font-weight: bold; margin-right: 1px; }
.pe { width: 9px; height: 9px; }
.combo.space { color: #898989; background: #555; border-color: #4e4e4e; height: 12px; margin-bottom: 4.200px; padding-left: 3px; }
.props { display: grid; grid-template-columns: 59px 66px; column-gap: 6px; grid-auto-rows: 14.120px; align-items: center; font-size: 7.100px; }
.props label { text-align: right; color: #d2d2d2; white-space: nowrap; line-height: 12px; }
.props label.cut { padding-right: 1.500px; }
.f { height: 11.500px; background: #5b5b5b; border: 1px solid #494949; border-bottom-color: #434343; display: flex; align-items: center; padding: 0 1.500px 0 2.500px; color: #ececec; }
.f b { font-weight: 600; font-size: 7px; }
.f .caret { margin-left: auto; }
.f .sw { margin: 0 5px 0 3px; }
.f .ln { margin: 0 7px 0 1px; }
.f.in { padding-left: 1px; flex: 1; }
.f.off { background: #555; border-color: #4d4d4d; color: #8a8a8a; padding-left: 1px; }
.split { display: flex; gap: 3px; align-items: center; }
.slider { width: 40px; justify-content: space-between; border-left: 1px dotted #4f8fe0; }
.slider i { width: 1px; height: 4px; background: #777; margin: 5px 0 0 15px; }
.mini { width: 23px; padding-left: 3px; }
.split .in { width: 50px; }

.status { height: 15px; background: #4d4d4d; border-top: 1px solid #3c3c3c; display: flex; align-items: center; flex: none; color: #a2a2a2; font-size: 6.900px; }
.model { width: 34.500px; height: 14px; line-height: 13px; text-align: center; background: #626262; color: #e6e6e6; font-weight: bold; font-size: 6.700px; }
.add { width: 8px; height: 8px; margin: 0 8px 0 5.500px; }
.lay { width: 36px; line-height: 12px; margin-bottom: 1px; }
.coords { font: 7.400px/12px "Open Sans", sans-serif; color: #cfcfcf; width: 107px; margin: 0 0 1px auto; white-space: nowrap; }
.toggles { display: flex; gap: 1.500px; margin-bottom: .5px; }
.toggles svg { width: 12px; height: 12px; stroke: #dadada; }
.toggles .on { background: #6c96c8; stroke: #f2f5f9; }
.scale { font: 7.200px/12px "Open Sans", sans-serif; margin: 0 2.500px 1px .5px; color: #c4c4c4; }
.shapes { width: 11px; height: 11px; margin: 0 3px 0 5px; }
.cog { width: 10px; height: 10px; margin-right: 4.500px; }
```
